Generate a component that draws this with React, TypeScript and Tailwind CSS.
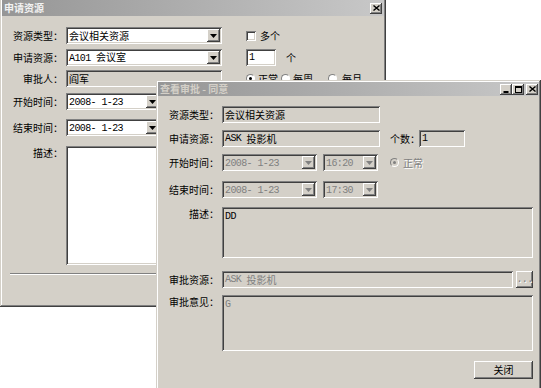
import React from "react";

const SUNKEN =
  "shadow-[inset_1px_1px_0_#808080,inset_-1px_-1px_0_#ffffff,inset_2px_2px_0_#404040,inset_-2px_-2px_0_#d4d0c8]";
const RAISED =
  "shadow-[inset_-1px_-1px_0_#404040,inset_1px_1px_0_#ffffff,inset_-2px_-2px_0_#808080,inset_2px_2px_0_#d4d0c8]";
const WINDOW =
  "shadow-[inset_-1px_-1px_0_#404040,inset_1px_1px_0_#d4d0c8,inset_-2px_-2px_0_#808080,inset_2px_2px_0_#ffffff]";

function M({ children }: { children: React.ReactNode }) {
  return (
    <span className="[font-family:'Liberation_Mono',monospace] tracking-[-0.6px] whitespace-pre">
      {children}
    </span>
  );
}

function Label({ children, top = false }: { children: React.ReactNode; top?: boolean }) {
  return (
    <div className={`w-[61px] shrink-0 text-right leading-[12px] whitespace-nowrap ${top ? "mt-[1px]" : ""}`}>
      {children}
    </div>
  );
}

function Field({
  className = "",
  children,
}: {
  className?: string;
  children?: React.ReactNode;
}) {
  return (
    <div
      className={`${SUNKEN} shrink-0 flex items-center pl-[3px] pr-[2px] overflow-hidden whitespace-pre leading-[13px] ${className}`}
    >
      {children}
    </div>
  );
}

function Arrow({ color = "#000000" }: { color?: string }) {
  return (
    <svg width="7" height="4" viewBox="0 0 7 4">
      <path d="M0 0H7L3.5 4Z" fill={color} />
    </svg>
  );
}

function Select({
  className = "",
  disabled = false,
  children,
}: {
  className?: string;
  disabled?: boolean;
  children?: React.ReactNode;
}) {
  return (
    <div
      className={`${SUNKEN} shrink-0 h-[17px] flex items-center pl-[3px] pr-[2px] whitespace-pre leading-[13px] ${
        disabled ? "bg-[#d4d0c8] text-[#808080]" : "bg-white text-black"
      } ${className}`}
    >
      <div className="flex-1 min-w-0">{children}</div>
      <div className={`${RAISED} bg-[#d4d0c8] w-[13px] h-[13px] shrink-0 flex items-center justify-center`}>
        <Arrow color={disabled ? "#808080" : "#000000"} />
      </div>
    </div>
  );
}

function Checkbox({ className = "" }: { className?: string }) {
  return <div className={`${SUNKEN} bg-white w-[10px] h-[10px] shrink-0 ${className}`} />;
}

function Radio({
  className = "",
  checked = false,
  disabled = false,
}: {
  className?: string;
  checked?: boolean;
  disabled?: boolean;
}) {
  return (
    <div
      className={`w-[9px] h-[9px] shrink-0 rounded-full border border-t-[#808080] border-l-[#808080] border-r-white border-b-white flex items-center justify-center ${
        disabled ? "bg-[#d4d0c8]" : "bg-white"
      } ${className}`}
    >
      {checked && (
        <div className={`w-[3px] h-[3px] rounded-full ${disabled ? "bg-[#808080]" : "bg-black"}`} />
      )}
    </div>
  );
}

function CapButton({ kind, className = "" }: { kind: "min" | "max" | "close"; className?: string }) {
  return (
    <div className={`${RAISED} bg-[#d4d0c8] w-[12px] h-[11px] shrink-0 flex items-center justify-center ${className}`}>
      {kind === "close" && (
        <svg width="7" height="6" viewBox="0 0 7 6">
          <path d="M0.5 0.5L6.5 5.5M6.5 0.5L0.5 5.5" stroke="#000" strokeWidth="1.4" />
        </svg>
      )}
      {kind === "min" && (
        <svg width="7" height="7" viewBox="0 0 7 7">
          <rect x="0.5" y="5" width="5" height="2" fill="#000" />
        </svg>
      )}
      {kind === "max" && (
        <svg width="7" height="7" viewBox="0 0 7 7">
          <rect x="0.5" y="0.5" width="6" height="6" fill="none" stroke="#000" strokeWidth="1" />
          <rect x="0" y="0" width="7" height="2" fill="#000" />
        </svg>
      )}
    </div>
  );
}

function TitleBar({
  title,
  textClass,
  height,
  children,
}: {
  title: string;
  textClass: string;
  height: string;
  children?: React.ReactNode;
}) {
  return (
    <div
      className={`${height} shrink-0 bg-linear-to-r from-[#969696] to-[#c8c8c8] flex items-center justify-between pl-[2px] pr-[1px]`}
    >
      <span className={`font-bold text-[10px] leading-[12px] whitespace-pre ${textClass}`}>{title}</span>
      <div className="flex items-center">{children}</div>
    </div>
  );
}

function Button({ className = "", children }: { className?: string; children?: React.ReactNode }) {
  return (
    <div className={`${RAISED} bg-[#d4d0c8] shrink-0 flex items-center justify-center leading-[12px] ${className}`}>
      {children}
    </div>
  );
}

function ApplyWindow() {
  return (
    <div className={`absolute left-0 top-[-2px] w-[386px] h-[309px] bg-[#d4d0c8] ${WINDOW} p-[2px] flex flex-col`}>
      <TitleBar title="申请资源" textClass="text-[#f2f2f2]" height="h-[16px]">
        <CapButton kind="close" className="mr-[1px]" />
      </TitleBar>

      <div className="flex items-center mt-[11px]">
        <Label>资源类型：</Label>
        <Select className="w-[156px] ml-[3px]">会议相关资源</Select>
        <Checkbox className="ml-[24px]" />
        <span className="ml-[4px] leading-[12px]">多个</span>
      </div>

      <div className="flex items-center mt-[5px]">
        <Label>申请资源：</Label>
        <Select className="w-[156px] ml-[3px]">
          <M>A101 </M>会议室
        </Select>
        <Field className="w-[30px] h-[17px] ml-[24px] bg-white">
          <M>1</M>
        </Field>
        <span className="ml-[10px] leading-[12px]">个</span>
      </div>

      <div className="flex items-center mt-[4px]">
        <Label>审批人：</Label>
        <Field className="w-[156px] h-[17px] ml-[3px] bg-[#d4d0c8]">阎军</Field>
        <Radio checked className="ml-[24px]" />
        <span className="ml-[3px] leading-[12px]">正常</span>
        <Radio className="ml-[3px]" />
        <span className="ml-[3px] leading-[12px]">每周</span>
        <Radio className="ml-[15px]" />
        <span className="ml-[5px] leading-[12px]">每月</span>
      </div>

      <div className="flex items-center mt-[6px]">
        <Label>开始时间：</Label>
        <Select className="w-[95px] ml-[3px]">
          <M>2008- 1-23</M>
        </Select>
      </div>

      <div className="flex items-center mt-[9px]">
        <Label>结束时间：</Label>
        <Select className="w-[95px] ml-[3px]">
          <M>2008- 1-23</M>
        </Select>
      </div>

      <div className="flex items-start mt-[10px]">
        <Label top>描述：</Label>
        <Field className="w-[300px] h-[119px] ml-[3px] bg-white" />
      </div>

      <div className="mt-[8px] mx-[8px] h-[2px] border-t border-t-[#808080] border-b border-b-white" />
    </div>
  );
}

function ViewWindow() {
  return (
    <div className={`absolute left-[156px] top-[80px] w-[385px] h-[320px] bg-[#d4d0c8] ${WINDOW} p-[2px] flex flex-col`}>
      <TitleBar title="查看审批 - 同意" textClass="text-[#d4d0c8]" height="h-[14px]">
        <CapButton kind="min" />
        <CapButton kind="max" />
        <CapButton kind="close" className="ml-[2px]" />
      </TitleBar>

      <div className="flex items-center mt-[10px]">
        <Label>资源类型：</Label>
        <Field className="w-[158px] h-[17px] ml-[3px] bg-[#d4d0c8]">会议相关资源</Field>
      </div>

      <div className="flex items-center mt-[7px]">
        <Label>申请资源：</Label>
        <Field className="w-[158px] h-[17px] ml-[3px] bg-[#d4d0c8]">
          <M>ASK </M>投影机
        </Field>
        <span className="ml-[10px] w-[29px] leading-[12px] whitespace-nowrap">个数：</span>
        <Field className="w-[46px] h-[17px] bg-[#d4d0c8]">
          <M>1</M>
        </Field>
      </div>

      <div className="flex items-center mt-[7px]">
        <Label>开始时间：</Label>
        <Select disabled className="w-[95px] ml-[3px]">
          <M>2008- 1-23</M>
        </Select>
        <Select disabled className="w-[55px] ml-[6px]">
          <M>16:20</M>
        </Select>
        <Radio checked disabled className="ml-[12px]" />
        <span className="ml-[4px] leading-[12px] text-[#808080] [text-shadow:1px_1px_0_#ffffff]">正常</span>
      </div>

      <div className="flex items-center mt-[10px]">
        <Label>结束时间：</Label>
        <Select disabled className="w-[95px] ml-[3px]">
          <M>2008- 1-23</M>
        </Select>
        <Select disabled className="w-[55px] ml-[6px]">
          <M>17:30</M>
        </Select>
      </div>

      <div className="flex items-start mt-[9px]">
        <Label top>描述：</Label>
        <Field className="w-[311px] h-[51px] ml-[3px] bg-[#d4d0c8] !items-start pt-[3px]">
          <M>DD</M>
        </Field>
      </div>

      <div className="flex items-center mt-[13px]">
        <Label>审批资源：</Label>
        <Field className="w-[291px] h-[17px] ml-[3px] bg-[#d4d0c8] text-[#808080]">
          <M>ASK </M>投影机
        </Field>
        <Button className="w-[17px] h-[17px] ml-[3px] text-[#808080] [text-shadow:1px_1px_0_#ffffff]">
          <M>...</M>
        </Button>
      </div>

      <div className="flex items-start mt-[7px]">
        <Label top>审批意见：</Label>
        <Field className="w-[311px] h-[56px] ml-[3px] bg-[#d4d0c8] text-[#808080] !items-start pt-[3px]">
          <M>G</M>
        </Field>
      </div>

      <div className="flex justify-end mt-[10px] pr-[6px]">
        <Button className="w-[59px] h-[18px]">关闭</Button>
      </div>
    </div>
  );
}

export default function App() {
  return (
    <div className="relative w-[541px] h-[388px] overflow-hidden bg-white text-[10px] text-black [font-family:'Noto_Sans_CJK_SC',sans-serif]">
      <ApplyWindow />
      <ViewWindow />
    </div>
  );
}
